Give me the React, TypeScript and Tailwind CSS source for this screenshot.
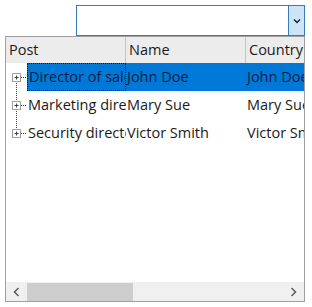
import React from "react";

const rows = [
  { post: "Director of sales", name: "John Doe", country: "John Doe", selected: true },
  { post: "Marketing director", name: "Mary Sue", country: "Mary Sue", selected: false },
  { post: "Security director", name: "Victor Smith", country: "Victor Smith", selected: false },
];

function Gutter({ index, total }: { index: number; total: number }) {
  const top = index === 0 ? 14 : 0;
  const bottom = index === total - 1 ? 14 : 28;
  return (
    <svg width="21" height="28" className="shrink-0 block">
      <line x1="10.5" y1={top} x2="10.5" y2={bottom} stroke="#404040" strokeWidth="1" strokeDasharray="1 1" />
      <line x1="15" y1="14.5" x2="21" y2="14.5" stroke="#404040" strokeWidth="1" strokeDasharray="1 1" />
      <rect x="6.5" y="10.5" width="8" height="8" fill="#ffffff" stroke="#a0a0a0" />
      <line x1="8.5" y1="14.5" x2="12.5" y2="14.5" stroke="#404040" />
      <line x1="10.5" y1="12.5" x2="10.5" y2="16.5" stroke="#404040" />
    </svg>
  );
}

export default function App() {
  return (
    <div
      className="w-[312px] h-[307px] bg-white overflow-hidden flex flex-col"
      style={{ fontFamily: '"Open Sans", "Noto Sans", sans-serif' }}
    >
      {/* combo box */}
      <div className="ml-[76px] mt-[5px] w-[229px] h-[31px] border border-[#3a7ab8] flex bg-white">
        <div className="flex-1" />
        <div className="w-[16px] h-full bg-[#cce4f7] border-l border-[#3a7ab8] flex items-center justify-center">
          <svg width="8" height="6" viewBox="0 0 8 6">
            <path d="M1 1.5 L4 4.5 L7 1.5" fill="none" stroke="#202020" strokeWidth="1.4" />
          </svg>
        </div>
      </div>

      {/* grid */}
      <div className="ml-[5px] w-[300px] h-[266px] border border-[#a0a0a0] flex flex-col overflow-hidden">
        {/* header */}
        <div className="h-[26px] flex bg-[#ececec] text-[14.5px] text-[#1a1a1a] shrink-0">
          <div className="w-[120px] shrink-0 border-r border-[#c4c4c4] pl-[3px] flex items-center">Post</div>
          <div className="w-[120px] shrink-0 border-r border-[#c4c4c4] pl-[3px] flex items-center">Name</div>
          <div className="w-[120px] shrink-0 pl-[3px] flex items-center">Country</div>
        </div>
        {/* rows */}
        <div className="flex flex-col text-[14.5px] shrink-0">
          {rows.map((r, i) => (
            <div key={i} className="h-[28px] flex">
              <Gutter index={i} total={rows.length} />
              <div
                className={
                  "w-[99px] shrink-0 overflow-hidden whitespace-nowrap flex items-center pl-[1px] " +
                  (r.selected
                    ? "bg-[#0078d7] text-[#0c1c44] border border-dotted border-[#1a1a1a]"
                    : "text-[#1a1a1a]")
                }
              >
                {r.post}
              </div>
              <div
                className={
                  "w-[120px] shrink-0 overflow-hidden whitespace-nowrap flex items-center pl-[1px] " +
                  (r.selected ? "bg-[#0078d7] text-[#0c1c44]" : "text-[#1a1a1a]")
                }
              >
                {r.name}
              </div>
              <div
                className={
                  "flex-1 overflow-hidden whitespace-nowrap flex items-center pl-[1px] " +
                  (r.selected ? "bg-[#0078d7] text-[#0c1c44]" : "text-[#1a1a1a]")
                }
              >
                {r.country}
              </div>
            </div>
          ))}
        </div>
        <div className="flex-1" />
        {/* horizontal scrollbar */}
        <div className="h-[19px] shrink-0 bg-[#f0f0f0] flex items-center">
          <div className="w-[21px] h-full flex items-center justify-center">
            <svg width="7" height="10" viewBox="0 0 7 10">
              <path d="M5.5 1 L1.5 5 L5.5 9" fill="none" stroke="#606060" strokeWidth="1.6" />
            </svg>
          </div>
          <div className="w-[106px] h-[18px] bg-[#cdcdcd]" />
          <div className="flex-1" />
          <div className="w-[21px] h-full flex items-center justify-center">
            <svg width="7" height="10" viewBox="0 0 7 10">
              <path d="M1.5 1 L5.5 5 L1.5 9" fill="none" stroke="#606060" strokeWidth="1.6" />
            </svg>
          </div>
        </div>
      </div>
    </div>
  );
}
